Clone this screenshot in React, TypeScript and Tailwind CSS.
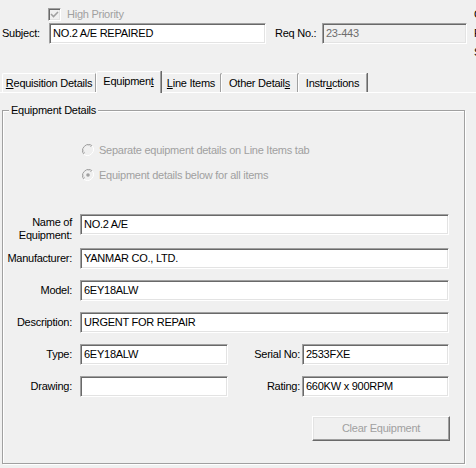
import React from "react";

const sunken =
  "border border-t-[#a0a0a0] border-l-[#a0a0a0] border-b-white border-r-white shadow-[inset_1px_1px_0_#696969,inset_-1px_-1px_0_#e3e3e3]";

function Input({ value, className, ro }: { value: string; className: string; ro?: boolean }) {
  return (
    <div
      className={`${sunken} h-[21px] flex items-center pl-[3px] overflow-hidden whitespace-nowrap ${
        ro ? "bg-[#f0f0f0] text-[#6d6d6d]" : "bg-white text-black"
      } ${className}`}
    >
      {value}
    </div>
  );
}

function Radio({ checked, label }: { checked?: boolean; label: string }) {
  return (
    <div className="flex items-center h-[14px] gap-[5px] text-[#a0a0a0]">
      <svg width="12" height="12" viewBox="0 0 12 12">
        <path d="M10.2 1.8 A6 6 0 0 0 1.8 10.2" fill="none" stroke="#a0a0a0" strokeWidth="1" />
        <path d="M9.3 2.7 A4.8 4.8 0 0 0 2.7 9.3" fill="none" stroke="#696969" strokeWidth="1" opacity="0.5" />
        <path d="M1.8 10.2 A6 6 0 0 0 10.2 1.8" fill="none" stroke="#ffffff" strokeWidth="1" />
        <circle cx="6" cy="6" r="4.2" fill="#f0f0f0" />
        {checked && <circle cx="6" cy="6" r="1.8" fill="#a0a0a0" />}
      </svg>
      <span>{label}</span>
    </div>
  );
}

function Tab({ children, w }: { children: React.ReactNode; w: string }) {
  return (
    <div
      className={`${w} h-[19px] flex items-center justify-center border-l border-t border-l-white border-t-white border-r border-r-[#a0a0a0] shadow-[1px_0_0_#696969] rounded-tl-[2px]`}
    >
      {children}
    </div>
  );
}

export default function App() {
  return (
    <div className="relative w-[476px] h-[468px] overflow-hidden bg-[#f0f0f0] text-[11px] leading-[13px] tracking-[-0.25px] text-black font-['Liberation_Sans',Arial,sans-serif]">
      {/* Header */}
      <div className="flex h-[71px]">
        <div className="w-[474px] shrink-0">
          <div className="flex items-center h-[14px] mt-[7px] ml-[48px] gap-[6px] text-[#a0a0a0]">
            <div className={`${sunken} w-[13px] h-[13px] bg-[#f0f0f0] flex items-center justify-center`}>
              <svg width="9" height="9" viewBox="0 0 9 9">
                <path d="M1 4 L3.5 6.5 L8 2" fill="none" stroke="#a0a0a0" strokeWidth="1.6" />
              </svg>
            </div>
            <span>High Priority</span>
          </div>
          <div className="flex items-center h-[21px] mt-[2px]">
            <span className="ml-[2px] w-[47px]">Subject:</span>
            <Input value="NO.2 A/E REPAIRED" className="w-[217px]" />
            <span className="ml-[9px] w-[47px]">Req No.:</span>
            <Input value="23-443" ro className="w-[145px]" />
          </div>
        </div>
        <div className="flex flex-col shrink-0 pt-[8px] gap-[6px] whitespace-nowrap">
          <span>Created:</span>
          <span>Requested:</span>
          <span>Status:</span>
        </div>
      </div>

      {/* Tabs */}
      <div className="flex items-end h-[21px] pl-[2px]">
        <Tab w="w-[94px]">
          <span>
            <u>R</u>equisition Details
          </span>
        </Tab>
        <div className="relative z-10 w-[65px] h-[22px] -mb-[1px] flex items-center justify-center pb-[2px] bg-[#f0f0f0] border-l border-t border-l-white border-t-white border-r border-r-[#a0a0a0] shadow-[1px_0_0_#696969] rounded-tl-[2px]">
          <span>
            Equipmen<u>t</u>
          </span>
        </div>
        <Tab w="w-[60px]">
          <span>
            <u>L</u>ine Items
          </span>
        </Tab>
        <Tab w="w-[77px]">
          <span>
            Other Detail<u>s</u>
          </span>
        </Tab>
        <Tab w="w-[69px]">
          <span>
            Instr<u>u</u>ctions
          </span>
        </Tab>
      </div>

      {/* Tab page */}
      <div className="border-t border-t-white pl-[2px]">
        <div className="relative mt-[17px] w-[463px] h-[354px] border border-[#a0a0a0] shadow-[inset_1px_1px_0_white,1px_1px_0_white]">
          <span className="absolute left-[6px] -top-[7px] px-[2px] bg-[#f0f0f0]">Equipment Details</span>

          <div className="flex flex-col pl-[79px] pt-[32px] gap-[11px]">
            <Radio label="Separate equipment details on Line Items tab" />
            <Radio checked label="Equipment details below for all items" />
          </div>

          <div className="flex flex-col mt-[32px]">
            <div className="flex items-start">
              <div className="w-[69px] text-right pt-[2px] leading-[13px]">
                Name of
                <br />
                Equipment:
              </div>
              <Input value="NO.2 A/E" className="ml-[8px] w-[369px]" />
            </div>
            <div className="flex items-center mt-[6px]">
              <div className="w-[69px] text-right">Manufacturer:</div>
              <Input value="YANMAR CO., LTD." className="ml-[8px] w-[369px]" />
            </div>
            <div className="flex items-center mt-[11px]">
              <div className="w-[69px] text-right">Model:</div>
              <Input value="6EY18ALW" className="ml-[8px] w-[369px]" />
            </div>
            <div className="flex items-center mt-[11px]">
              <div className="w-[69px] text-right">Description:</div>
              <Input value="URGENT FOR REPAIR" className="ml-[8px] w-[369px]" />
            </div>
            <div className="flex items-center mt-[11px]">
              <div className="w-[69px] text-right">Type:</div>
              <Input value="6EY18ALW" className="ml-[8px] w-[148px]" />
              <div className="w-[74px] text-right pr-[2px]">Serial No:</div>
              <Input value="2533FXE" className="w-[147px]" />
            </div>
            <div className="flex items-center mt-[11px]">
              <div className="w-[69px] text-right">Drawing:</div>
              <Input value="" className="ml-[8px] w-[148px]" />
              <div className="w-[74px] text-right pr-[2px]">Rating:</div>
              <Input value="660KW x 900RPM" className="w-[147px]" />
            </div>
            <div className="flex justify-end mt-[19px] pr-[14px]">
              <div className="w-[138px] h-[25px] flex items-center justify-center text-[#a0a0a0] bg-[#f0f0f0] border border-t-white border-l-white border-b-[#696969] border-r-[#696969] shadow-[inset_-1px_-1px_0_#a0a0a0,inset_1px_1px_0_#e3e3e3]">
                Clear Equipment
              </div>
            </div>
          </div>
        </div>
      </div>
    </div>
  );
}
